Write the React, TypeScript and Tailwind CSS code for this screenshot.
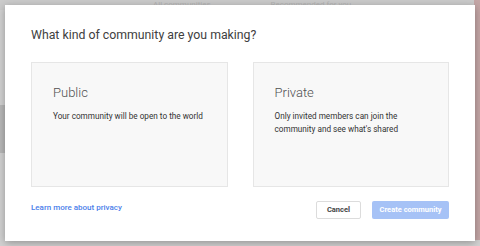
export default function App() {
  return (
    <div className="relative h-[246px] w-[480px] overflow-hidden bg-[#d2d2d2] font-['Roboto',sans-serif]">
      {/* page behind the overlay */}
      <div className="flex h-[10px] items-center gap-[60px] bg-[#cbcbcb] pl-[153px] text-[8px] text-[#b4b4b4]">
        <span>All communities</span>
        <span>Recommended for you</span>
      </div>
      <div className="absolute left-0 top-[105px] h-[48px] w-[5px] bg-[#b8b8b8]" />
      <div className="absolute right-0 top-0 h-[240px] w-[6px] bg-[#c4a6a6]" />

      {/* dialog */}
      <div className="absolute left-[5px] top-[5px] flex h-[236px] w-[470px] flex-col bg-white px-[26px] shadow-[0_2px_8px_rgba(0,0,0,0.3)]">
        <h1 className="mt-[22px] whitespace-nowrap text-[12.3px] leading-[16px] text-[#404040]">
          What kind of community are you making?
        </h1>

        <div className="mt-[19px] flex gap-[25px]">
          <div className="h-[125px] w-[197px] border border-[#e6e6e6] bg-[#f8f8f8] px-[21px] pt-[22px]">
            <p className="text-[13px] font-light leading-[16px] text-[#505050]">Public</p>
            <p className="mt-[9px] whitespace-nowrap text-[8.2px] leading-[12.7px] text-[#333]">
              Your community will be open to the world
            </p>
          </div>
          <div className="h-[125px] w-[197px] border border-[#e6e6e6] bg-[#f8f8f8] px-[21px] pt-[22px]">
            <p className="text-[13px] font-light leading-[16px] text-[#505050]">Private</p>
            <p className="mt-[9px] whitespace-nowrap text-[8.2px] leading-[12.7px] text-[#333]">
              Only invited members can join the
              <br />
              community and see what's shared
            </p>
          </div>
        </div>

        <div className="mt-[14px] flex items-center">
          <a className="-mt-[4px] whitespace-nowrap text-[8px] font-medium text-[#4a80ea]">
            Learn more about privacy
          </a>
          <div className="ml-auto flex gap-[11px]">
            <button className="h-[18px] w-[45px] whitespace-nowrap rounded-[2px] border border-[#dcdcdc] bg-white text-[7.5px] font-bold text-[#444]">
              Cancel
            </button>
            <button className="h-[18px] w-[77px] whitespace-nowrap rounded-[2px] bg-[#a6c2f6] text-[7.5px] font-bold text-white">
              Create community
            </button>
          </div>
        </div>
      </div>
    </div>
  );
}
